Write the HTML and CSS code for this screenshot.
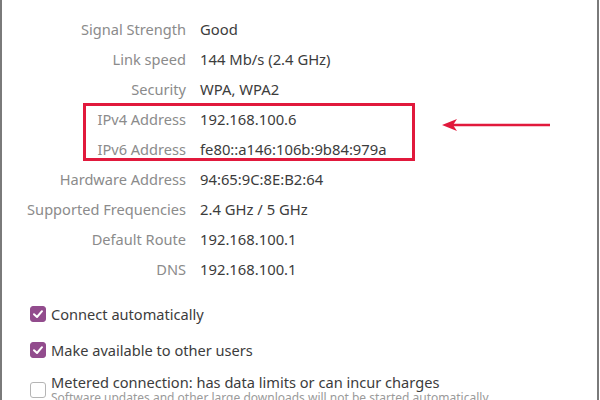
FILE: index.html
```html
<!DOCTYPE html>
<html>
<head>
<meta charset="utf-8">
<link rel="stylesheet" href="styles.css">
</head>
<body>
<div class="panel">
  <div class="details">
    <div class="label">Signal Strength</div><div class="value">Good</div>
    <div class="label">Link speed</div><div class="value">144 Mb/s (2.4 GHz)</div>
    <div class="label">Security</div><div class="value">WPA, WPA2</div>
    <div class="label">IPv4 Address</div><div class="value">192.168.100.6</div>
    <div class="label">IPv6 Address</div><div class="value">fe80::a146:106b:9b84:979a</div>
    <div class="label">Hardware Address</div><div class="value">94:65:9C:8E:B2:64</div>
    <div class="label">Supported Frequencies</div><div class="value">2.4 GHz / 5 GHz</div>
    <div class="label">Default Route</div><div class="value">192.168.100.1</div>
    <div class="label">DNS</div><div class="value">192.168.100.1</div>
  </div>
  <div class="options">
    <div class="option">
      <span class="box checked"><svg viewBox="0 0 16 16" width="16" height="16"><path d="M4 8.2 L7 11 L12 5.2" fill="none" stroke="#fff" stroke-width="2" stroke-linecap="round" stroke-linejoin="round"/></svg></span>
      <span class="opt-text">Connect automatically</span>
    </div>
    <div class="option">
      <span class="box checked"><svg viewBox="0 0 16 16" width="16" height="16"><path d="M4 8.2 L7 11 L12 5.2" fill="none" stroke="#fff" stroke-width="2" stroke-linecap="round" stroke-linejoin="round"/></svg></span>
      <span class="opt-text">Make available to other users</span>
    </div>
    <div class="option metered">
      <span class="box"></span>
      <div class="opt-col">
        <span class="opt-text">Metered connection: has data limits or can incur charges</span>
        <span class="sub">Software updates and other large downloads will not be started automatically.</span>
      </div>
    </div>
  </div>
  <div class="highlight"></div>
  <svg class="arrow" width="120" height="20" viewBox="0 0 120 20">
    <path d="M12 10 H110" stroke="#e1193c" stroke-width="2.5" fill="none"/>
    <path d="M2 10 L17 4 L13 10 L17 16 Z" fill="#e1193c"/>
  </svg>
</div>
</body>
</html>
```
FILE: styles.css
```css
html, body {
  margin: 0;
  padding: 0;
  background: #fff;
}
body {
  font-family: "Noto Sans", "Open Sans", sans-serif;
  font-size: 14.8px;
  color: #3c3c3c;
  width: 600px;
  height: 400px;
  overflow: hidden;
}
.panel {
  position: relative;
  height: 400px;
  box-sizing: border-box;
  margin-right: 1px;
  border-left: 2px solid #7a7a7a;
  border-right: 2px solid #7a7a7a;
  overflow: hidden;
}
.details {
  display: grid;
  grid-template-columns: 184px auto;
  column-gap: 14px;
  grid-auto-rows: 30px;
  align-items: center;
  padding-top: 14px;
}
.label {
  text-align: right;
  color: #8b8b8b;
  white-space: nowrap;
  font-size: 14.6px;
}
.value {
  color: #3c3c3c;
  white-space: nowrap;
}
.options {
  padding-top: 22px;
  padding-left: 28px;
  display: flex;
  flex-direction: column;
  gap: 20px;
}
.option {
  display: flex;
  align-items: center;
  gap: 5px;
  height: 16px;
}
.option.metered {
  align-items: flex-start;
  height: auto;
  margin-top: -4px;
}
.box {
  width: 16px;
  height: 16px;
  box-sizing: border-box;
  border: 1px solid #b5b5b5;
  border-radius: 3px;
  background: #fff;
  flex: none;
  display: block;
}
.box svg { display: block; margin: -1px; }
.box.checked {
  background: #924c8d;
  border-color: #924c8d;
}
.metered .box { margin-top: 8px; }
.opt-text {
  font-size: 14.6px;
  color: #3c3c3c;
  white-space: nowrap;
}
.opt-col {
  display: flex;
  flex-direction: column;
  line-height: 17px;
}
.sub {
  font-size: 12px;
  line-height: 14px;
  color: #9a9a9a;
  white-space: nowrap;
}
.highlight {
  position: absolute;
  left: 81px;
  top: 103px;
  width: 332px;
  height: 58px;
  box-sizing: border-box;
  border: 3px solid #e1193c;
}
.arrow {
  position: absolute;
  left: 438px;
  top: 115px;
}
```
